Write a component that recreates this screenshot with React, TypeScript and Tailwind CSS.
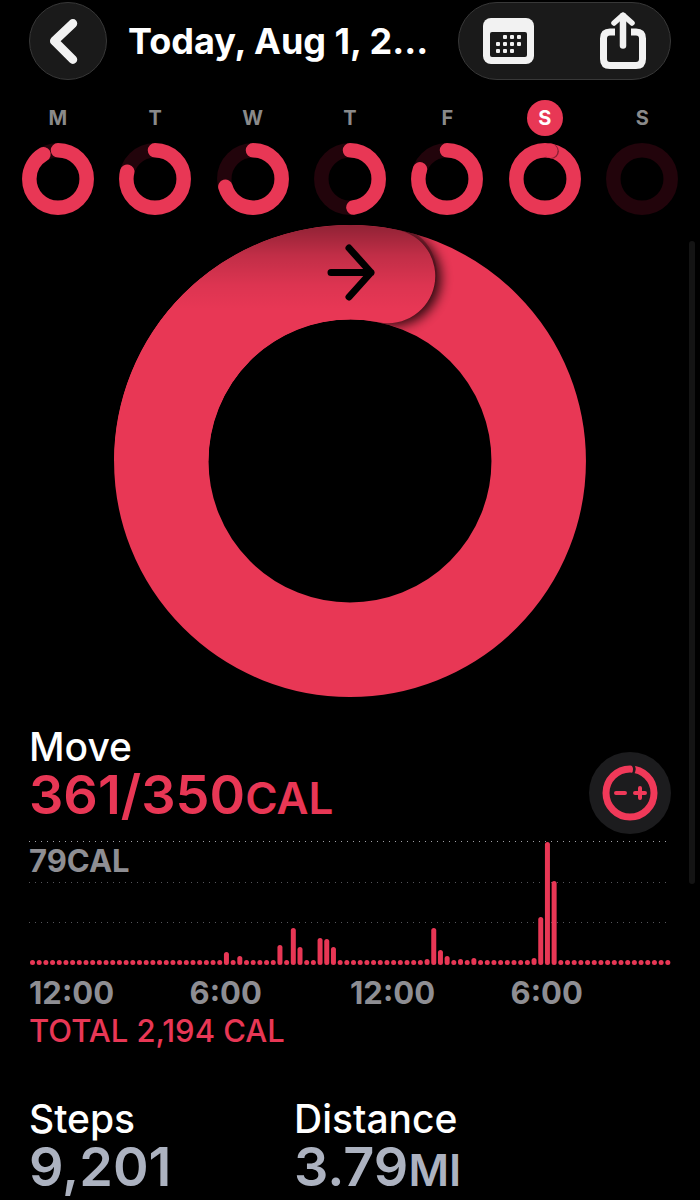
import { useState } from "react";

type Day = {
  id: string;
  letter: string;
  label: string;
  progress: number;
};

const DAYS: Day[] = [
  { id: "mon", letter: "M", label: "Monday", progress: 0.914 },
  { id: "tue", letter: "T", label: "Tuesday", progress: 0.79 },
  { id: "wed", letter: "W", label: "Wednesday", progress: 0.705 },
  { id: "thu", letter: "T", label: "Thursday", progress: 0.48 },
  { id: "fri", letter: "F", label: "Friday", progress: 0.804 },
  { id: "sat", letter: "S", label: "Saturday", progress: 1.03 },
  { id: "sun", letter: "S", label: "Sunday", progress: 0 }
];

const HOURS = ["12:00", "6:00", "12:00", "6:00"];

// One bar per quarter hour, anything not listed is an idle dot.
const BAR_COUNT = 96;
const ACTIVE_BARS: Record<number, number> = {
  29: 13,
  31: 9,
  37: 20,
  39: 37,
  40: 18,
  43: 27,
  44: 26,
  45: 18,
  59: 6,
  60: 37,
  61: 15,
  62: 9,
  64: 6,
  66: 7,
  75: 7,
  76: 48,
  77: 123,
  78: 84
};

function BackIcon() {
  return (
    <svg viewBox="0 0 78 78" className="h-full w-full" aria-hidden="true">
      <path d="M44 21 L25 39 L44 58" fill="none" stroke="#f2f2f2" strokeWidth="9" strokeLinecap="round" strokeLinejoin="round" />
    </svg>
  );
}

function CalendarIcon() {
  const dots = [
    [22, 19], [29, 19], [36, 19],
    [15, 26], [22, 26], [29, 26], [36, 26],
    [15, 33], [22, 33], [29, 33]
  ];
  return (
    <svg viewBox="0 0 51 46" className="h-[46px] w-[51px]" aria-hidden="true">
      <rect width="51" height="46" rx="8" fill="#f2f2f2" />
      <rect x="7" y="14" width="37" height="25" rx="2" fill="#1a1a1a" />
      {dots.map(([x, y]) => (
        <rect key={`${x}-${y}`} x={x - 2} y={y - 2} width="4" height="4" rx="1" fill="#f2f2f2" />
      ))}
    </svg>
  );
}

function ShareIcon() {
  return (
    <svg viewBox="0 0 46 58" className="h-[58px] w-[46px]" fill="none" stroke="#f2f2f2" aria-hidden="true">
      <path d="M15 20 H10 Q3.500 20 3.500 26.500 V47 Q3.500 53.500 10 53.500 H36 Q42.500 53.500 42.500 47 V26.500 Q42.500 20 36 20 H31" strokeWidth="7" />
      <path d="M23 33.500 V4" strokeWidth="6.500" strokeLinecap="round" />
      <path d="M14 11 L23 3 L32 11" strokeWidth="5.500" strokeLinecap="round" strokeLinejoin="round" />
    </svg>
  );
}

function SmallRing({ id, progress }: { id: string; progress: number }) {
  const r = 28.7;
  const length = 2 * Math.PI * r;
  const angle = (progress - 1) * 2 * Math.PI;
  const tipX = 36 + r * Math.sin(angle);
  const tipY = 36 - r * Math.cos(angle);
  return (
    <svg viewBox="0 0 72 72" className="size-[72px]" aria-hidden="true">
      <circle cx="36" cy="36" r={r} fill="none" stroke="#22040b" strokeWidth="14.500" />
      {progress > 0 && (
        <circle
          cx="36"
          cy="36"
          r={r}
          fill="none"
          stroke="#e83755"
          strokeWidth="14.500"
          strokeLinecap="round"
          strokeDasharray={`${Math.min(progress, 1) * length} ${length}`}
          transform="rotate(-90 36 36)"
        />
      )}
      {progress > 1 && (
        <>
          <defs>
            <clipPath id={`${id}-clip`}>
              <path d="M36 0 A36 36 0 0 1 72 36 H57.500 A21.500 21.500 0 0 0 36 14.500 Z" />
            </clipPath>
          </defs>
          <g clipPath={`url(#${id}-clip)`}>
            <circle cx={tipX + 1} cy={tipY + 0.5} r="7.500" fill="#8a2035" />
          </g>
          <circle cx={tipX} cy={tipY} r="7.200" fill="#e83755" />
        </>
      )}
    </svg>
  );
}

function MoveRing() {
  return (
    <svg viewBox="0 0 472 472" className="w-full max-w-[472px]" role="img" aria-label="Move ring, 361 of 350 calories">
      <defs>
        <clipPath id="ring-clip">
          <path clipRule="evenodd" d="M236 0 A236 236 0 1 1 236 472 A236 236 0 1 1 236 0 Z M236 94.500 A141.500 141.500 0 1 0 236 377.500 A141.500 141.500 0 1 0 236 94.500 Z" />
        </clipPath>
        <clipPath id="lap-clip">
          <path d="M0 0 H274 A47.300 47.300 0 0 1 274 98 H0 Z" />
        </clipPath>
        <linearGradient id="lap-shade" x1="0" y1="0" x2="0" y2="1">
          <stop offset="0" stopColor="#000" stopOpacity="0.380" />
          <stop offset="0.350" stopColor="#000" stopOpacity="0.170" />
          <stop offset="0.700" stopColor="#000" stopOpacity="0.050" />
          <stop offset="1" stopColor="#000" stopOpacity="0" />
        </linearGradient>
        <filter id="tip-blur" x="-50%" y="-50%" width="200%" height="200%">
          <feGaussianBlur stdDeviation="6" />
        </filter>
      </defs>
      <circle cx="236" cy="236" r="188.700" fill="none" stroke="#e83755" strokeWidth="94.500" />
      <g clipPath="url(#ring-clip)">
        <circle cx="279" cy="53" r="48" fill="#000" opacity="0.800" filter="url(#tip-blur)" />
        <path d="M236 47.300 A188.700 188.700 0 0 1 274 51" fill="none" stroke="#e83755" strokeWidth="94.500" strokeLinecap="round" />
        <path d="M236 0 V94.500 A141.500 141.500 0 0 0 94.500 236 H0 A236 236 0 0 1 236 0 Z" fill="#e83755" />
        <rect x="40" y="0" width="290" height="86" fill="url(#lap-shade)" clipPath="url(#lap-clip)" />
      </g>
      <path d="M217 47.500 H257 M235 23 L257 47.500 L235 72" fill="none" stroke="#000" strokeWidth="7" strokeLinecap="round" strokeLinejoin="round" />
    </svg>
  );
}

function GoalIcon() {
  return (
    <svg viewBox="0 0 82 82" className="size-full" fill="none" stroke="#f03959" aria-hidden="true">
      <circle cx="41" cy="41" r="24" strokeWidth="7" />
      <path d="M43 12 Q48 17 43 23" stroke="#1c1c1e" strokeWidth="2.500" />
      <path d="M27 41 H36 M46 41 H56 M51 36 V46" strokeWidth="4" strokeLinecap="round" />
    </svg>
  );
}

function HourlyChart() {
  const step = 642 / BAR_COUNT;
  return (
    <svg viewBox="0 0 642 125" className="block w-full" role="img" aria-label="Active calories through the day">
      <path d="M0 1.500 H642" stroke="#a0a0a5" strokeDasharray="1 5" />
      <path d="M0 42.500 H642 M0 82.500 H642" stroke="#55555a" strokeDasharray="1 5" />
      {Array.from({ length: BAR_COUNT }, (_, i) => {
        const h = ACTIVE_BARS[i] ?? 5;
        return <rect key={i} x={i * step + 1} y={125 - h} width="5" height={h} rx="2.500" fill="#e83755" />;
      })}
    </svg>
  );
}

export default function App() {
  const [selected, setSelected] = useState("sat");

  return (
    <div className="relative min-h-screen overflow-hidden bg-black pt-[2px] font-['Inter','Liberation_Sans',sans-serif] text-white">
      <header className="flex items-center px-[29px]">
        <button type="button" aria-label="Back" className="size-[78px] shrink-0 rounded-full border border-[#383838] bg-[#1a1a1a]">
          <BackIcon />
        </button>
        <h1 className="mr-auto ml-[21px] text-4xl font-bold whitespace-nowrap">Today, Aug 1, 2...</h1>
        <div className="flex h-[78px] w-[213px] shrink-0 items-center justify-between rounded-full border border-[#383838] bg-[#1a1a1a] px-6">
          <button type="button" aria-label="Calendar">
            <CalendarIcon />
          </button>
          <button type="button" aria-label="Share">
            <ShareIcon />
          </button>
        </div>
      </header>

      <nav aria-label="Days of the week" className="mt-5 grid grid-cols-7 px-[9px]">
        {DAYS.map((day) => (
          <button key={day.id} type="button" aria-label={day.label} aria-pressed={selected === day.id} onClick={() => setSelected(day.id)} className="flex flex-col items-center gap-[7px]">
            <span className={`flex size-9 items-center justify-center rounded-full text-xl font-bold ${selected === day.id ? "bg-[#e83755] text-white" : "text-[#8a8a8a]"}`}>
              {day.letter}
            </span>
            <SmallRing id={day.id} progress={day.progress} />
          </button>
        ))}
      </nav>

      <main>
        <div className="mt-[10px] flex justify-center px-[29px]">
          <MoveRing />
        </div>

        <section className="mt-7 px-[29px]">
          <div className="flex items-end justify-between">
            <div className="pb-[10px]">
              <h2 className="text-[39px] leading-[44px] font-medium">Move</h2>
              <p className="text-[54px] leading-[52px] font-semibold text-[#e83755]">
                361/350<span className="text-[44px]">CAL</span>
              </p>
            </div>
            <button type="button" aria-label="Change goal" className="size-[82px] rounded-full bg-[#1c1c1e]">
              <GoalIcon />
            </button>
          </div>

          <div className="relative mt-[6px]">
            <HourlyChart />
            <span className="absolute top-[3px] left-0 text-[31px] leading-9 font-bold text-[#8e8e93]">79CAL</span>
          </div>
          <div className="mt-2 grid grid-cols-4 text-[31px] leading-10 font-bold text-[#8e8e93]">
            {HOURS.map((hour, i) => (
              <span key={i}>{hour}</span>
            ))}
          </div>
          <p className="text-[31px] leading-9 font-medium text-[#e83755]">TOTAL 2,194 CAL</p>
        </section>

        <dl className="mt-12 flex px-[29px]">
          <div className="w-[265px]">
            <dt className="text-[39px] leading-[44px] font-medium">Steps</dt>
            <dd className="text-[54px] leading-[52px] font-semibold text-[#acb2c0]">9,201</dd>
          </div>
          <div>
            <dt className="text-[39px] leading-[44px] font-medium">Distance</dt>
            <dd className="text-[54px] leading-[52px] font-semibold text-[#acb2c0]">
              3.79<span className="text-[44px]">MI</span>
            </dd>
          </div>
        </dl>
      </main>

      <div className="absolute top-[241px] right-[5px] h-[643px] w-[6px] rounded-full bg-[#141414]" />
    </div>
  );
}
